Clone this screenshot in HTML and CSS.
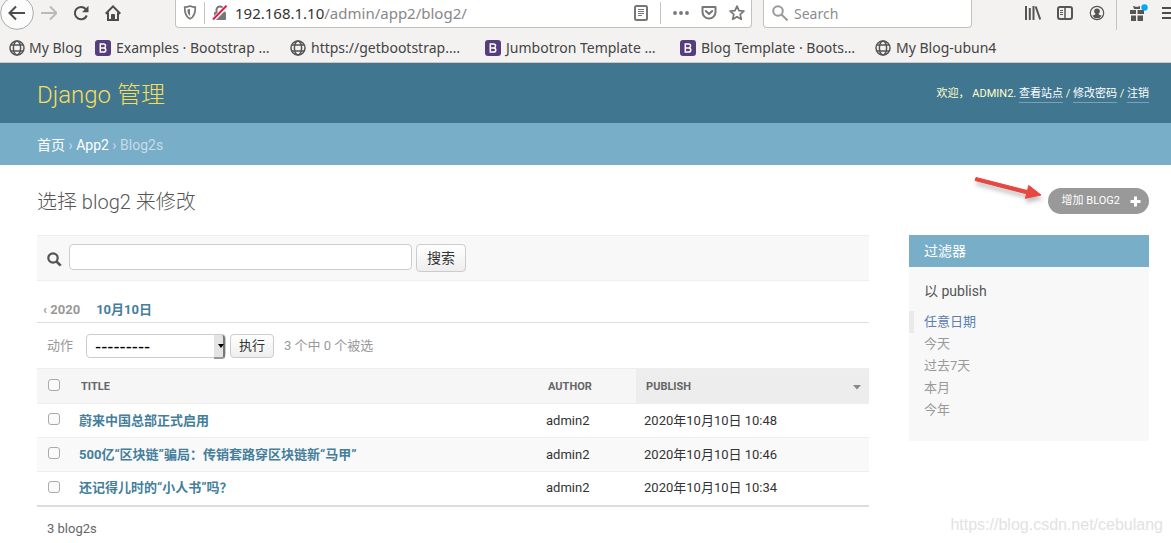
FILE: index.html
```html
<!DOCTYPE html>
<html lang="zh-CN">
<head>
<meta charset="utf-8">
<meta name="viewport" content="width=device-width, initial-scale=1">
<title>选择 blog2 来修改 | Django 管理</title>
<link rel="stylesheet" href="styles.css">
</head>
<body>
<svg class="defs" aria-hidden="true">
  <symbol id="globe" viewBox="0 0 16 16"><g fill="none" stroke="#555" stroke-width="1.5"><circle cx="8" cy="8" r="7"/><ellipse cx="8" cy="8" rx="3.6" ry="7"/><path d="M2 5h12M2 11h12"/></g></symbol>
  <symbol id="boot" viewBox="0 0 16 16"><rect width="16" height="16" rx="3" fill="#563d7c"/><path d="M5.3 3.9h3.3c2.6 0 2.6 3.6.2 4 2.8.3 2.6 4.2-.3 4.2H5.3zM5.3 7.9h3.5" fill="none" stroke="#fff" stroke-width="1.5"/></symbol>
</svg>
<div class="browser">
  <div class="toolbar">
    <div class="nav-buttons">
      <button class="tool back" aria-label="Back"><svg width="34" height="34" viewBox="0 0 34 34" fill="none"><circle cx="17" cy="17" r="16.4" fill="#fcfcfc" stroke="#aaa"/><path d="M25 17H10M16 10.500l-6.500 6.500 6.500 6.500" stroke="#4c4c4c" stroke-width="2"/></svg></button>
      <button class="tool" aria-label="Forward"><svg width="16" height="16" viewBox="0 0 16 16" fill="none" stroke="#bababa" stroke-width="2"><path d="M0 8h15M9 1.500L15.500 8 9 14.500"/></svg></button>
      <button class="tool" aria-label="Reload"><svg width="16" height="16" viewBox="0 0 16 16"><path d="M13.800 10.500A6.200 6.200 0 1 1 12.700 4" fill="none" stroke="#4c4c4c" stroke-width="2"/><path d="M15.500.8v6.400H9z" fill="#4c4c4c"/></svg></button>
      <button class="tool" aria-label="Home"><svg width="16" height="16" viewBox="0 0 16 16" fill="none" stroke="#4c4c4c" stroke-width="2"><path d="M.7 8.700L8 1.400l7.300 7.300M3 7.500V15h10V7.500"/><path d="M6.500 15V9.500h3V15" fill="#4c4c4c" stroke-width="1"/></svg></button>
    </div>
    <div class="address">
      <svg width="14" height="15" viewBox="0 0 14 15"><path d="M7 1c2 .9 3.800 1.200 5.300 1.200C12.400 8.500 10.800 12 7 13.800 3.200 12 1.600 8.500 1.700 2.200 3.200 2.200 5 1.900 7 1z" fill="none" stroke="#777" stroke-width="1.700"/><path d="M7 4v7C5 9.500 4.400 7.500 4.400 4.600 5.300 4.500 6 4.300 7 4z" fill="#777"/></svg>
      <span class="divider"></span>
      <svg width="16" height="16" viewBox="0 0 16 16"><path d="M4.500 8V5a3.500 3.500 0 0 1 7 0v3" fill="none" stroke="#777" stroke-width="2"/><rect x="2" y="7" width="12" height="8" rx="1" fill="#777"/><path d="M14.800 1L1.500 14.500" stroke="#fff" stroke-width="4"/><path d="M14.500.8L1 14.500" stroke="#e8174b" stroke-width="2"/></svg>
      <span class="url"><b>192.168.1.10</b>/admin/app2/blog2/</span>
      <svg width="14" height="16" viewBox="0 0 14 16" fill="none" stroke="#777"><rect x="1" y="1" width="12" height="14" rx="1.500" stroke-width="2"/><path d="M4 4.500h6M4 6.500h6M4 8.500h6M4 10.500h4"/></svg>
      <span class="divider end"></span>
      <svg class="dots" width="16" height="4" viewBox="0 0 16 4" fill="#777"><circle cx="2" cy="2" r="1.900"/><circle cx="8" cy="2" r="1.900"/><circle cx="14" cy="2" r="1.900"/></svg>
      <svg width="16" height="14" viewBox="0 0 16 14" fill="none" stroke="#777" stroke-width="2" stroke-linejoin="round" stroke-linecap="round"><path d="M1.500 1h13v5a6.500 6.500 0 0 1-13 0zM4.800 5L8 8l3.200-3"/></svg>
      <svg class="star" width="16" height="16" viewBox="0 0 16 16" fill="none" stroke="#777" stroke-width="1.700" stroke-linejoin="round"><path d="M8 1.100l2 4.500 4.900.5-3.700 3.300 1.100 4.900L8 11.700l-4.300 2.600 1.100-4.900L1.100 6.100 6 5.600z"/></svg>
    </div>
    <label class="web-search">
      <svg width="16" height="16" viewBox="0 0 16 16" fill="none" stroke="#999" stroke-width="2"><circle cx="6" cy="6" r="4.800"/><path d="M9.500 9.500l6 6"/></svg>
      <input type="text" placeholder="Search" aria-label="Search">
    </label>
    <div class="extras">
      <button class="tool" aria-label="Library"><svg width="16" height="14" viewBox="0 0 16 14" stroke="#555" stroke-width="2" fill="none"><path d="M1 0v14M4.800 2v12M8.500 0v14M10.700.5L15.200 13.500"/></svg></button>
      <button class="tool" aria-label="Sidebar"><svg width="16" height="14" viewBox="0 0 16 14" stroke="#555" fill="none"><rect x="1" y="1" width="14" height="12" rx="2" stroke-width="2"/><path d="M8 1v12" stroke-width="1.500"/><path d="M3 4.500h3M3 6.500h3M3 8.500h3"/></svg></button>
      <button class="tool" aria-label="Account"><svg width="16" height="16" viewBox="0 0 16 16"><circle cx="8" cy="8" r="6.700" fill="none" stroke="#555" stroke-width="1.200"/><circle cx="8" cy="6.200" r="2.800" fill="#555"/><path d="M3.300 10.500c2-.3 2.500-1 3.200-1.600h3c.7.600 1.200 1.300 3.200 1.600a5.300 5.300 0 0 1-9.400 0z" fill="#555"/></svg></button>
      <span class="divider tall"></span>
      <button class="tool" aria-label="What's new"><svg width="20" height="18" viewBox="0 0 20 18"><path d="M2 6h6v4H2zM9.500 6h6.500v4H9.500zM3 11.500h5V17H3zM9.500 11.500H15V17H9.500zM5 2l4 1 3-1v3H6z" fill="#555"/><circle cx="16.500" cy="3.500" r="3.200" fill="#00a8f5"/></svg></button>
      <button class="tool" aria-label="Menu"><svg width="16" height="14" viewBox="0 0 16 14" stroke="#4c4c4c" stroke-width="2"><path d="M0 2h16M0 7h16M0 12h16"/></svg></button>
    </div>
  </div>
  <nav class="bookmarks" aria-label="Bookmarks">
    <a class="short" href="#"><svg><use href="#globe"/></svg>My Blog</a>
    <a href="#"><svg><use href="#boot"/></svg>Examples · Bootstrap …</a>
    <a href="#"><svg><use href="#globe"/></svg>https://getbootstrap.…</a>
    <a href="#"><svg><use href="#boot"/></svg>Jumbotron Template …</a>
    <a href="#"><svg><use href="#boot"/></svg>Blog Template · Boots…</a>
    <a href="#"><svg><use href="#globe"/></svg>My Blog-ubun4</a>
  </nav>
</div>

<header class="site-header">
  <h1><a href="#">Django 管理</a></h1>
  <div class="user-tools">欢迎， <strong>ADMIN2</strong>. <a href="#">查看站点</a> / <a href="#">修改密码</a> / <a href="#">注销</a></div>
</header>
<nav class="breadcrumbs" aria-label="Breadcrumb"><a href="#">首页</a> › <a href="#">App2</a> › Blog2s</nav>

<main class="content">
  <div class="title-row">
    <h2>选择 blog2 来修改</h2>
    <div class="add">
      <a href="#">增加 BLOG2 <svg width="11" height="11" viewBox="0 0 11 11"><path d="M5.500.5v10M.5 5.500h10" stroke="#fff" stroke-width="3"/></svg></a>
      <svg class="arrow" width="76" height="36" viewBox="0 0 76 36"><path d="M5 3.500L56.500 16.600l1.200-5.200L70 21l-15.600 3.300 1.200-4.500L4 6.500z" fill="#e8463f" stroke="#e8463f" stroke-linejoin="round"/></svg>
    </div>
  </div>
  <div class="changelist">
    <section class="results">
      <form class="search-bar">
        <label for="q"><svg width="15" height="15" viewBox="0 0 15 15" fill="none" stroke="#555"><circle cx="6" cy="6" r="4.700" stroke-width="2.200"/><path d="M9.500 9.500l4.200 4.200" stroke-width="2.600"/></svg></label>
        <input id="q" type="text" aria-label="搜索">
        <button type="button">搜索</button>
      </form>
      <nav class="dates" aria-label="日期"><a class="up" href="#">‹ 2020</a><a href="#">10月10日</a></nav>
      <form class="actions">
        <label for="action">动作</label>
        <span class="select-wrap"><select id="action"><option>---------</option></select></span>
        <button type="button">执行</button>
        <span class="count">3 个中 0 个被选</span>
      </form>
      <table>
        <colgroup><col class="c-check"><col><col class="c-author"><col class="c-publish"></colgroup>
        <thead><tr><th><input type="checkbox" aria-label="全选"></th><th><a href="#">TITLE</a></th><th><a href="#">AUTHOR</a></th><th class="sorted"><div><a href="#">PUBLISH</a><svg width="8" height="5" viewBox="0 0 8 5"><path d="M0 0h8L4 4.500z" fill="#888"/></svg></div></th></tr></thead>
        <tbody>
          <tr><td><input type="checkbox" aria-label="选择第 1 行"></td><th><a href="#">蔚来中国总部正式启用</a></th><td>admin2</td><td>2020年10月10日 10:48</td></tr>
          <tr><td><input type="checkbox" aria-label="选择第 2 行"></td><th><a href="#">500亿“区块链”骗局：传销套路穿区块链新“马甲”</a></th><td>admin2</td><td>2020年10月10日 10:46</td></tr>
          <tr><td><input type="checkbox" aria-label="选择第 3 行"></td><th><a href="#">还记得儿时的“小人书”吗？</a></th><td>admin2</td><td>2020年10月10日 10:34</td></tr>
        </tbody>
      </table>
      <p class="paginator">3 blog2s</p>
    </section>
    <aside class="filter">
      <h2>过滤器</h2>
      <h3>以 publish</h3>
      <ul>
        <li class="selected"><a href="#">任意日期</a></li>
        <li><a href="#">今天</a></li>
        <li><a href="#">过去7天</a></li>
        <li><a href="#">本月</a></li>
        <li><a href="#">今年</a></li>
      </ul>
    </aside>
  </div>
</main>
<div class="watermark">https://blog.csdn.net/cebulang</div>
</body>
</html>
```
FILE: styles.css
```css
* { box-sizing: border-box; }
body {
  margin: 0;
  overflow: hidden;
  position: relative;
  min-height: 100vh;
  background: #fff;
  color: #333;
  font: 13px/18px Roboto, "Noto Sans CJK SC", sans-serif;
}
a { color: #447e9b; text-decoration: none; }
h1, h2, h3, p, ul { margin: 0; padding: 0; font-weight: 400; }
button, input, select { font: inherit; color: inherit; }
.defs { position: absolute; width: 0; height: 0; }

/* Browser chrome */
.browser {
  background: #f3f2f1;
  border-bottom: 1px solid #cfc8c2;
  color: #444;
  font: 14px/20px "Noto Sans", "Open Sans", sans-serif;
}
.toolbar { display: flex; height: 28px; }
.nav-buttons { display: flex; flex: none; width: 175px; padding: 0 0 2px 1px; }
.tool {
  display: flex;
  flex: none;
  align-items: center;
  justify-content: center;
  width: 32px;
  padding: 0;
  border: 0;
  background: none;
}
.tool svg { flex: none; }
.address, .web-search {
  display: flex;
  align-items: center;
  background: #fff;
  border: 1px solid #c3c1be;
  border-top: 0;
  border-radius: 0 0 4px 4px;
}
.address { flex: 1; min-width: 0; padding: 0 6px 2px 7px; }
.address svg { flex: none; }
.divider { flex: none; width: 1px; height: 22px; margin: 0 7px; background: #c5c5c5; }
.divider.end { margin: 0 12px; }
.divider.tall { height: 30px; margin: 0 5px 0 3px; }
.url { flex: 1; min-width: 0; padding: 0 0 0 7px; color: #888; font-size: 15px; white-space: nowrap; overflow: hidden; }
.url b { color: #333; font-weight: 400; }
.dots { margin-right: 12px; }
.star { margin-left: 12px; }
.web-search { flex: 0 0 209px; margin-left: 11px; padding: 0 8px 2px; gap: 6px; }
.web-search svg { flex: none; }
.web-search input { width: 100%; min-width: 0; padding: 2px 0 0; border: 0; outline: 0; background: none; }
.web-search input::placeholder { color: #8c8c8c; opacity: 1; }
.extras { display: flex; flex: 0 0 154px; min-width: 0; margin-left: 45px; padding-bottom: 2px; }
.bookmarks { display: flex; height: 34px; padding: 5px 9px 0; align-items: center; }
.bookmarks a { display: flex; align-items: center; flex: 0 0 195px; gap: 5px; color: #444; white-space: nowrap; }
.bookmarks .short { flex-basis: 86px; gap: 4px; }
.bookmarks svg { flex: none; width: 16px; height: 16px; }

/* Admin header */
.site-header {
  display: flex;
  align-items: center;
  justify-content: space-between;
  height: 60px;
  padding: 3px 22px 0 37px;
  background: #417690;
}
.site-header h1 { font-size: 24px; line-height: 32px; font-weight: 300; }
.site-header h1 a { color: #f5dd5d; }
.user-tools { color: #ffc; font-size: 11px; line-height: 16px; }
.user-tools strong { font-weight: 400; }
.user-tools a { display: inline-block; color: #fff; border-bottom: 1px solid #7ca1b3; }
.breadcrumbs { padding: 13px 37px 11px; background: #79aec8; color: #c4dce8; font-size: 14px; line-height: 18px; }
.breadcrumbs a { color: #fff; }

/* Content */
.content { padding: 20px 22px 0 37px; }
.title-row { display: flex; justify-content: space-between; padding: 3px 0 20px; }
.title-row h2 { padding-top: 1px; color: #555; font-size: 20px; line-height: 26px; font-weight: 300; }
.add { position: relative; }
.add a {
  display: flex;
  align-items: center;
  gap: 10px;
  padding: 0 8px 0 14px;
  border-radius: 13px;
  background: #999;
  color: #fff;
  font-size: 11px;
  line-height: 26px;
}
.arrow { position: absolute; right: 102px; top: -14px; filter: drop-shadow(1px 4px 2px #9999); }
.changelist { display: flex; align-items: flex-start; gap: 40px; }
.results { flex: 1; min-width: 0; }
.search-bar {
  display: flex;
  align-items: flex-start;
  gap: 4px;
  padding: 8px 10px;
  border: solid #eee;
  border-width: 1px 0;
  background: #f8f8f8;
}
.search-bar label { display: flex; padding: 8px 3px 0 0; }
.search-bar input { width: 343px; height: 26px; padding: 2px 6px; border: 1px solid #ccc; border-radius: 4px; background: #fff; }
.search-bar button, .actions button {
  height: 28px;
  padding: 0 10px;
  border: 1px solid #ccc;
  border-radius: 4px;
  background: linear-gradient(#fff, #eee);
  font-size: 14px;
}
.dates { display: flex; gap: 16px; padding: 20px 6px 3px; border-bottom: 1px solid #ddd; font-weight: 700; }
.dates .up { color: #999; }
.actions { display: flex; align-items: center; padding: 11px 10px 10px; color: #999; }
.select-wrap { position: relative; width: 140px; margin: 0 4px 0 13px; }
.select-wrap::before {
  content: "";
  position: absolute;
  right: 1px;
  top: 1px;
  width: 9px;
  height: 22px;
  border-right: 2px solid #777;
  border-bottom: 2px solid #999;
  border-radius: 0 3px 3px 0;
  background: #e4e4e4;
  pointer-events: none;
}
.select-wrap::after {
  content: "";
  position: absolute;
  right: 2px;
  top: 10px;
  border: solid transparent;
  border-width: 4px 3px 0;
  border-top-color: #000;
  pointer-events: none;
}
.actions select {
  display: block;
  appearance: none;
  width: 100%;
  height: 24px;
  padding: 0 8px;
  border: 1px solid #ccc;
  border-radius: 4px;
  background: #fff;
  color: #000;
  font-family: "DejaVu Sans", sans-serif;
  font-size: 17px;
}
.actions button { height: 24px; padding: 0 8px; color: #333; font-size: 13px; }
.count { margin-left: 10px; }

table { width: 100%; border-collapse: collapse; table-layout: fixed; border-bottom: 2px solid #ddd; }
.c-check { width: 34px; }
.c-author { width: 98px; }
.c-publish { width: 28%; }
tr { border-bottom: 1px solid #eee; }
tbody tr:nth-child(even) { background: #f9f9f9; }
tbody tr:last-child { border-bottom: 0; }
td, th { height: 34px; padding: 0 8px; text-align: left; vertical-align: middle; }
thead tr { background: #f6f6f6; border-top: 1px solid #eee; }
thead th { height: 35px; padding: 2px 10px 0; font-size: 11px; }
thead a { color: #666; }
thead .sorted { padding-right: 8px; background: #ededed; }
.sorted div { display: flex; align-items: center; justify-content: space-between; }
td:first-child, thead th:first-child { padding: 0 0 3px 11px; }
input[type="checkbox"] {
  display: block;
  appearance: none;
  width: 12px;
  height: 12px;
  margin: 0;
  border: 1px solid #aaa;
  border-radius: 3px;
  background: #fafafa;
}
.paginator { padding: 13px 10px 0; color: #666; }

.filter { flex: 0 0 240px; padding-bottom: 20px; background: #f8f8f8; }
.filter h2 { padding: 0 15px; background: #79aec8; color: #fff; font-size: 14px; line-height: 32px; }
.filter h3 { padding: 14px 15px 10px; color: #555; font-size: 14px; line-height: 20px; }
.filter ul { list-style: none; }
.filter li { padding-left: 15px; line-height: 22px; }
.filter li a { color: #999; }
.filter .selected { padding-left: 10px; border-left: 5px solid #eaeaea; }
.filter .selected a { color: #5b80b2; }

.watermark {
  position: absolute;
  right: 8px;
  bottom: 8px;
  color: #e2e2e2;
  font: 16px/20px "Liberation Sans", sans-serif;
  pointer-events: none;
}
```
